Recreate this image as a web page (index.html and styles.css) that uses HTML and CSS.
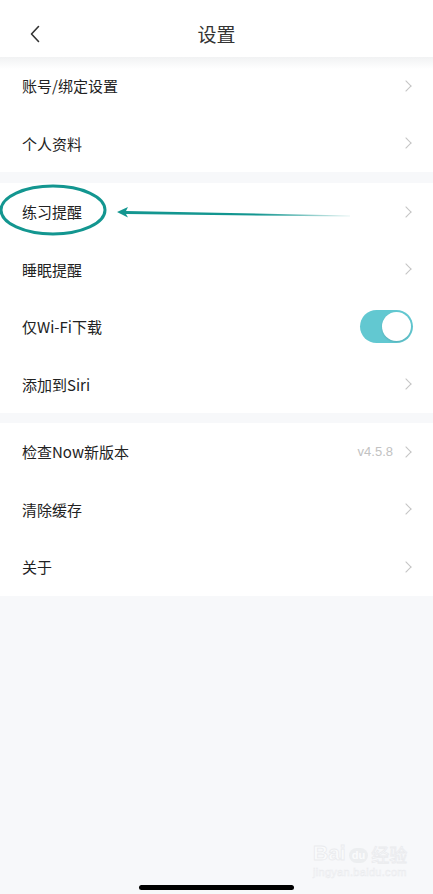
FILE: index.html
```html
<!DOCTYPE html>
<html lang="zh-CN">
<head>
<meta charset="utf-8">
<title>设置</title>
<link rel="stylesheet" href="styles.css">
</head>
<body>
<div class="screen">
  <header class="topbar">
    <svg class="back" width="12" height="18" viewBox="0 0 12 18"><path d="M9.5 1.5 L2.5 9 L9.5 16.5" fill="none" stroke="#333" stroke-width="1.6" stroke-linecap="round" stroke-linejoin="round"/></svg>
    <h1 class="title">设置</h1>
  </header>
  <div class="shadow"></div>

  <section class="group g1">
    <div class="row"><span class="label">账号/绑定设置</span><span class="chev"></span></div>
    <div class="row"><span class="label">个人资料</span><span class="chev"></span></div>
  </section>

  <section class="group g2">
    <div class="row"><span class="label">练习提醒</span><span class="chev"></span></div>
    <div class="row"><span class="label">睡眠提醒</span><span class="chev"></span></div>
    <div class="row"><span class="label">仅Wi-Fi下载</span><span class="toggle on"><span class="knob"></span></span></div>
    <div class="row"><span class="label">添加到Siri</span><span class="chev"></span></div>
  </section>

  <section class="group g3">
    <div class="row"><span class="label">检查Now新版本</span><span class="right"><span class="ver">v4.5.8</span><span class="chev"></span></span></div>
    <div class="row"><span class="label">清除缓存</span><span class="chev"></span></div>
    <div class="row"><span class="label">关于</span><span class="chev"></span></div>
  </section>

  <svg class="annot" width="433" height="60" viewBox="0 0 433 60">
    <defs>
      <linearGradient id="fade" x1="0" y1="0" x2="1" y2="0">
        <stop offset="0" stop-color="#139690"/>
        <stop offset="0.6" stop-color="#139690"/>
        <stop offset="1" stop-color="#139690" stop-opacity="0.1"/>
      </linearGradient>
    </defs>
    <ellipse cx="53" cy="30" rx="52" ry="24" fill="none" stroke="#139690" stroke-width="3"/>
    <path d="M117 32 L128 27 L126 31 L350 35.5 L350 36.5 L126 34 L128 37.5 Z" fill="url(#fade)"/>
  </svg>

  <div class="watermark">
    <div class="wm-top"><span class="wm-bai">Bai</span><span class="wm-du">du</span><span class="wm-jy">经验</span></div>
    <div class="wm-url">jingyan.baidu.com</div>
  </div>
  <div class="home"></div>
</div>
</body>
</html>
```
FILE: styles.css
```css
* { box-sizing: border-box; margin: 0; padding: 0; }
html, body { width: 433px; height: 894px; overflow: hidden; }
body {
  background: #f7f8fa;
  font-family: "Noto Sans CJK SC", "Noto Sans", "Liberation Sans", sans-serif;
  color: #222;
}
.screen { position: relative; width: 433px; height: 894px; }
.topbar {
  height: 57px;
  background: #fff;
  display: flex;
  align-items: center;
  justify-content: center;
  position: relative;
}
.back { position: absolute; left: 29px; top: 25px; }
.title { font-size: 19px; font-weight: 400; color: #333; line-height: 1; margin-top: 9px; }
.shadow {
  position: absolute; left: 0; top: 57px; width: 433px; height: 12px;
  background: linear-gradient(#f1f2f3, rgba(255,255,255,0));
  z-index: 2;
}
.group { background: #fff; }
.g2 { margin-top: 11px; }
.g3 { margin-top: 10px; }
.row {
  height: 57.5px;
  display: flex;
  align-items: center;
  justify-content: space-between;
  padding: 0 21px 0 22px;
}
.label { font-size: 15px; line-height: 1; color: #222; }
.chev {
  width: 8px; height: 8px;
  border-top: 1.2px solid #c4c4c4;
  border-right: 1.2px solid #c4c4c4;
  transform: rotate(45deg);
  margin-right: 2px;
}
.right { display: flex; align-items: center; }
.ver { font-family: "Liberation Sans", sans-serif; font-size: 13px; color: #c2c2c2; margin-right: 9px; }
.toggle {
  width: 53px; height: 33px; border-radius: 17px;
  background: #62c8d1;
  position: relative;
  margin-right: -1px;
}
.knob {
  position: absolute; right: 2px; top: 2px;
  width: 29px; height: 29px; border-radius: 50%;
  background: #fff;
  box-shadow: 0 1px 2px rgba(0,0,0,0.12);
}
.annot { position: absolute; left: 0; top: 180px; }
.watermark {
  position: absolute; left: 313px; top: 842px;
  font-family: "Liberation Sans", sans-serif;
}
.wm-top { display: flex; align-items: flex-end; line-height: 1; }
.wm-bai { font-size: 21px; font-weight: 700; color: #fafbfc; -webkit-text-stroke: 0.8px #eaebee; }
.wm-du { font-size: 11px; font-weight: 700; color: #fafbfc; background: #eceef0; border-radius: 8px; padding: 2px 3px; margin: 0 3px; }
.wm-jy { font-family: "Noto Sans CJK SC", sans-serif; font-size: 18px; color: #fafbfc; -webkit-text-stroke: 0.8px #eaebee; }
.wm-url { font-size: 11px; color: #fafbfc; -webkit-text-stroke: 0.5px #eaebee; margin-top: 3px; letter-spacing: 0.3px; }
.home {
  position: absolute; left: 139px; top: 885px;
  width: 155px; height: 5px; border-radius: 3px; background: #000;
}
```
